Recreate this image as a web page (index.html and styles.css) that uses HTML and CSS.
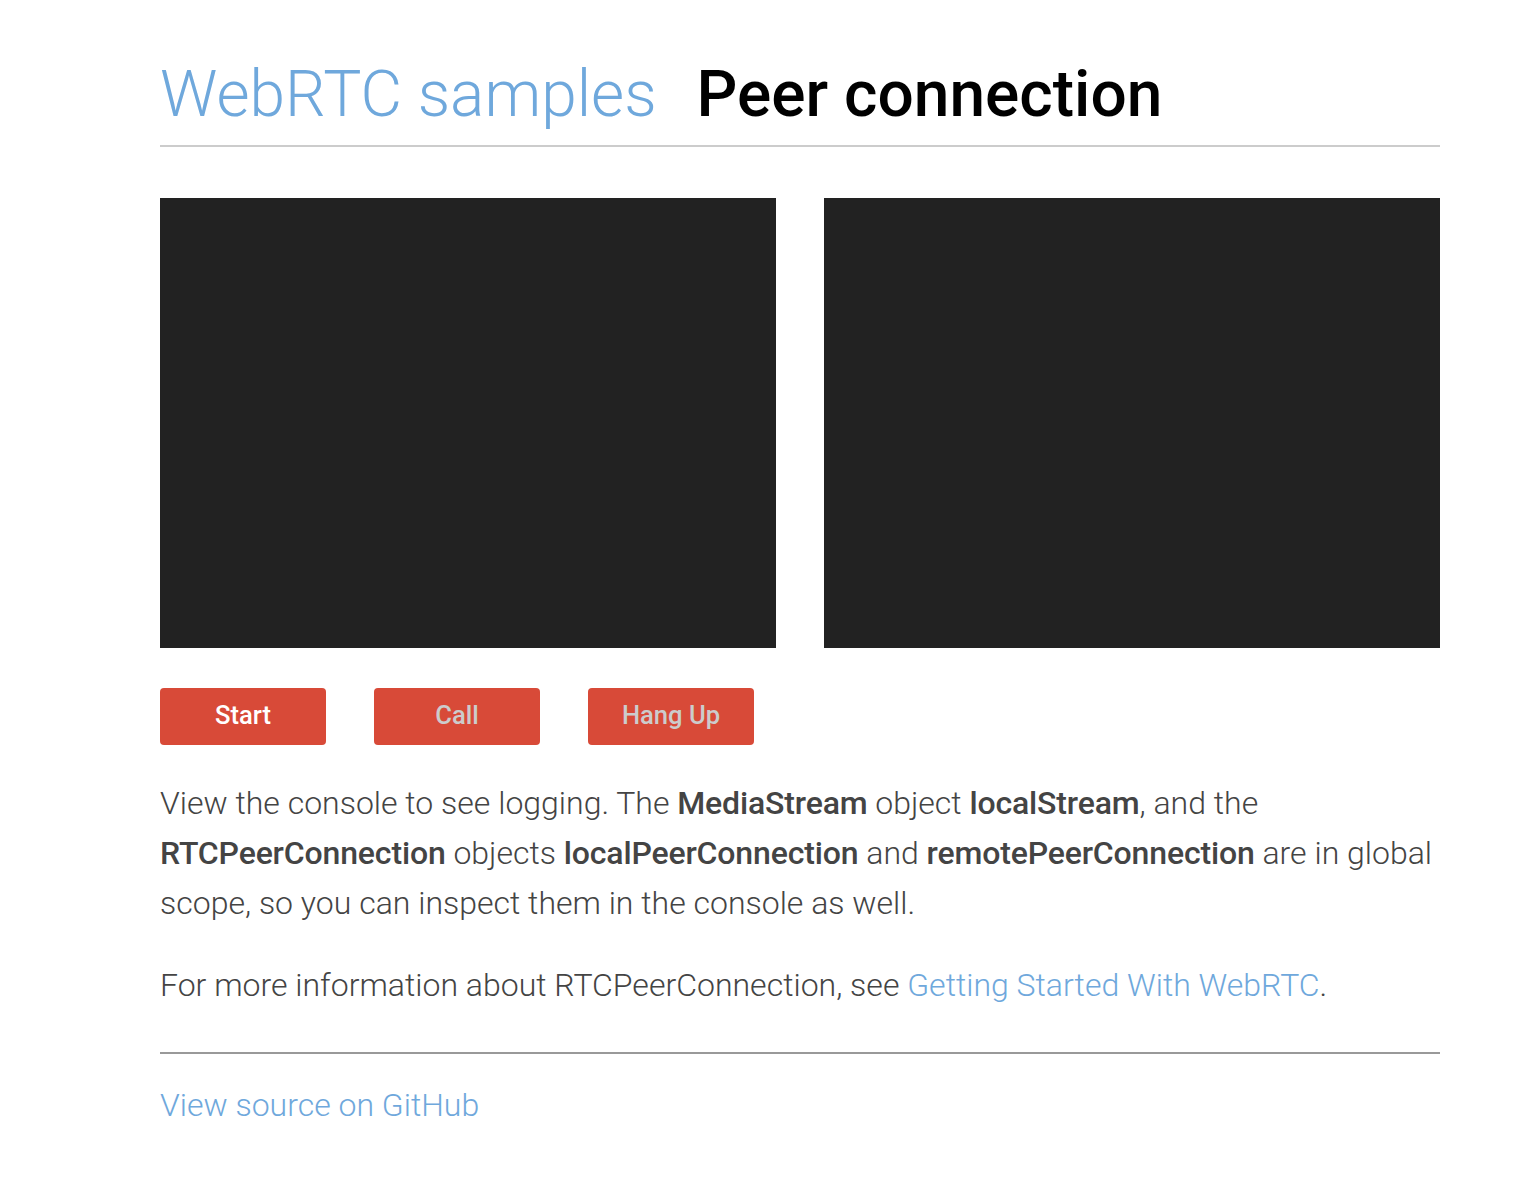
FILE: index.html
```html
<!DOCTYPE html>
<html lang="en">
<head>
<meta charset="utf-8">
<title>Peer connection</title>
<link rel="stylesheet" href="styles.css">
</head>
<body>
<div class="container">
  <h1 class="title"><a class="title-link" href="#">WebRTC samples</a><span>Peer connection</span></h1>
  <div class="videos">
    <div class="video"></div>
    <div class="video"></div>
  </div>
  <div class="buttons">
    <button class="btn">Start</button>
    <button class="btn btn-disabled">Call</button>
    <button class="btn btn-disabled">Hang Up</button>
  </div>
  <p class="text">View the console to see logging. The <strong>MediaStream</strong> object <strong>localStream</strong>, and the <strong>RTCPeerConnection</strong> objects <strong>localPeerConnection</strong> and <strong>remotePeerConnection</strong> are in global scope, so you can inspect them in the console as well.</p>
  <p class="text">For more information about RTCPeerConnection, see <a class="link" href="#">Getting Started With WebRTC</a>.</p>
  <hr class="rule">
  <a class="link source" href="#">View source on GitHub</a>
</div>
</body>
</html>
```

FILE: styles.css
```css
html, body {
  margin: 0;
  padding: 0;
  background: #ffffff;
}
body {
  font-family: Roboto, "Liberation Sans", sans-serif;
  font-weight: 300;
}
.container {
  width: 1280px;
  margin: 0 0 0 160px;
  padding-top: 57px;
}
.title {
  margin: 0 0 51px 0;
  padding: 0 0 13px 0;
  border-bottom: 2px solid #cccccc;
  font-size: 64px;
  font-weight: 500;
  line-height: 75px;
  color: #000000;
}
.title-link {
  color: #6fa8dc;
  font-weight: 300;
  text-decoration: none;
  margin-right: 40px;
}
.videos {
  display: flex;
  justify-content: space-between;
  margin-bottom: 40px;
}
.video {
  width: 616px;
  height: 450px;
  background: #222222;
}
.buttons {
  display: flex;
  gap: 48px;
  margin-bottom: 33px;
}
.btn {
  width: 166px;
  height: 57px;
  border: none;
  border-radius: 4px;
  background: #d84a38;
  color: #ffffff;
  font-family: Roboto, "Liberation Sans", sans-serif;
  font-weight: 500;
  font-size: 25.6px;
  padding: 0 0 3px 0;
}
.btn-disabled {
  color: #cccccc;
}
.text {
  color: #444444;
  font-size: 32px;
  line-height: 50px;
  margin: 0 0 32px 0;
}
.text strong {
  font-weight: 500;
  letter-spacing: -0.15px;
}
.link {
  color: #6fa8dc;
  text-decoration: none;
  font-weight: 300;
}
.rule {
  border: none;
  border-top: 2px solid #999999;
  margin: 42px 0 0 0;
}
.source {
  display: block;
  font-size: 32px;
  line-height: 38px;
  margin-top: 32px;
}
```
